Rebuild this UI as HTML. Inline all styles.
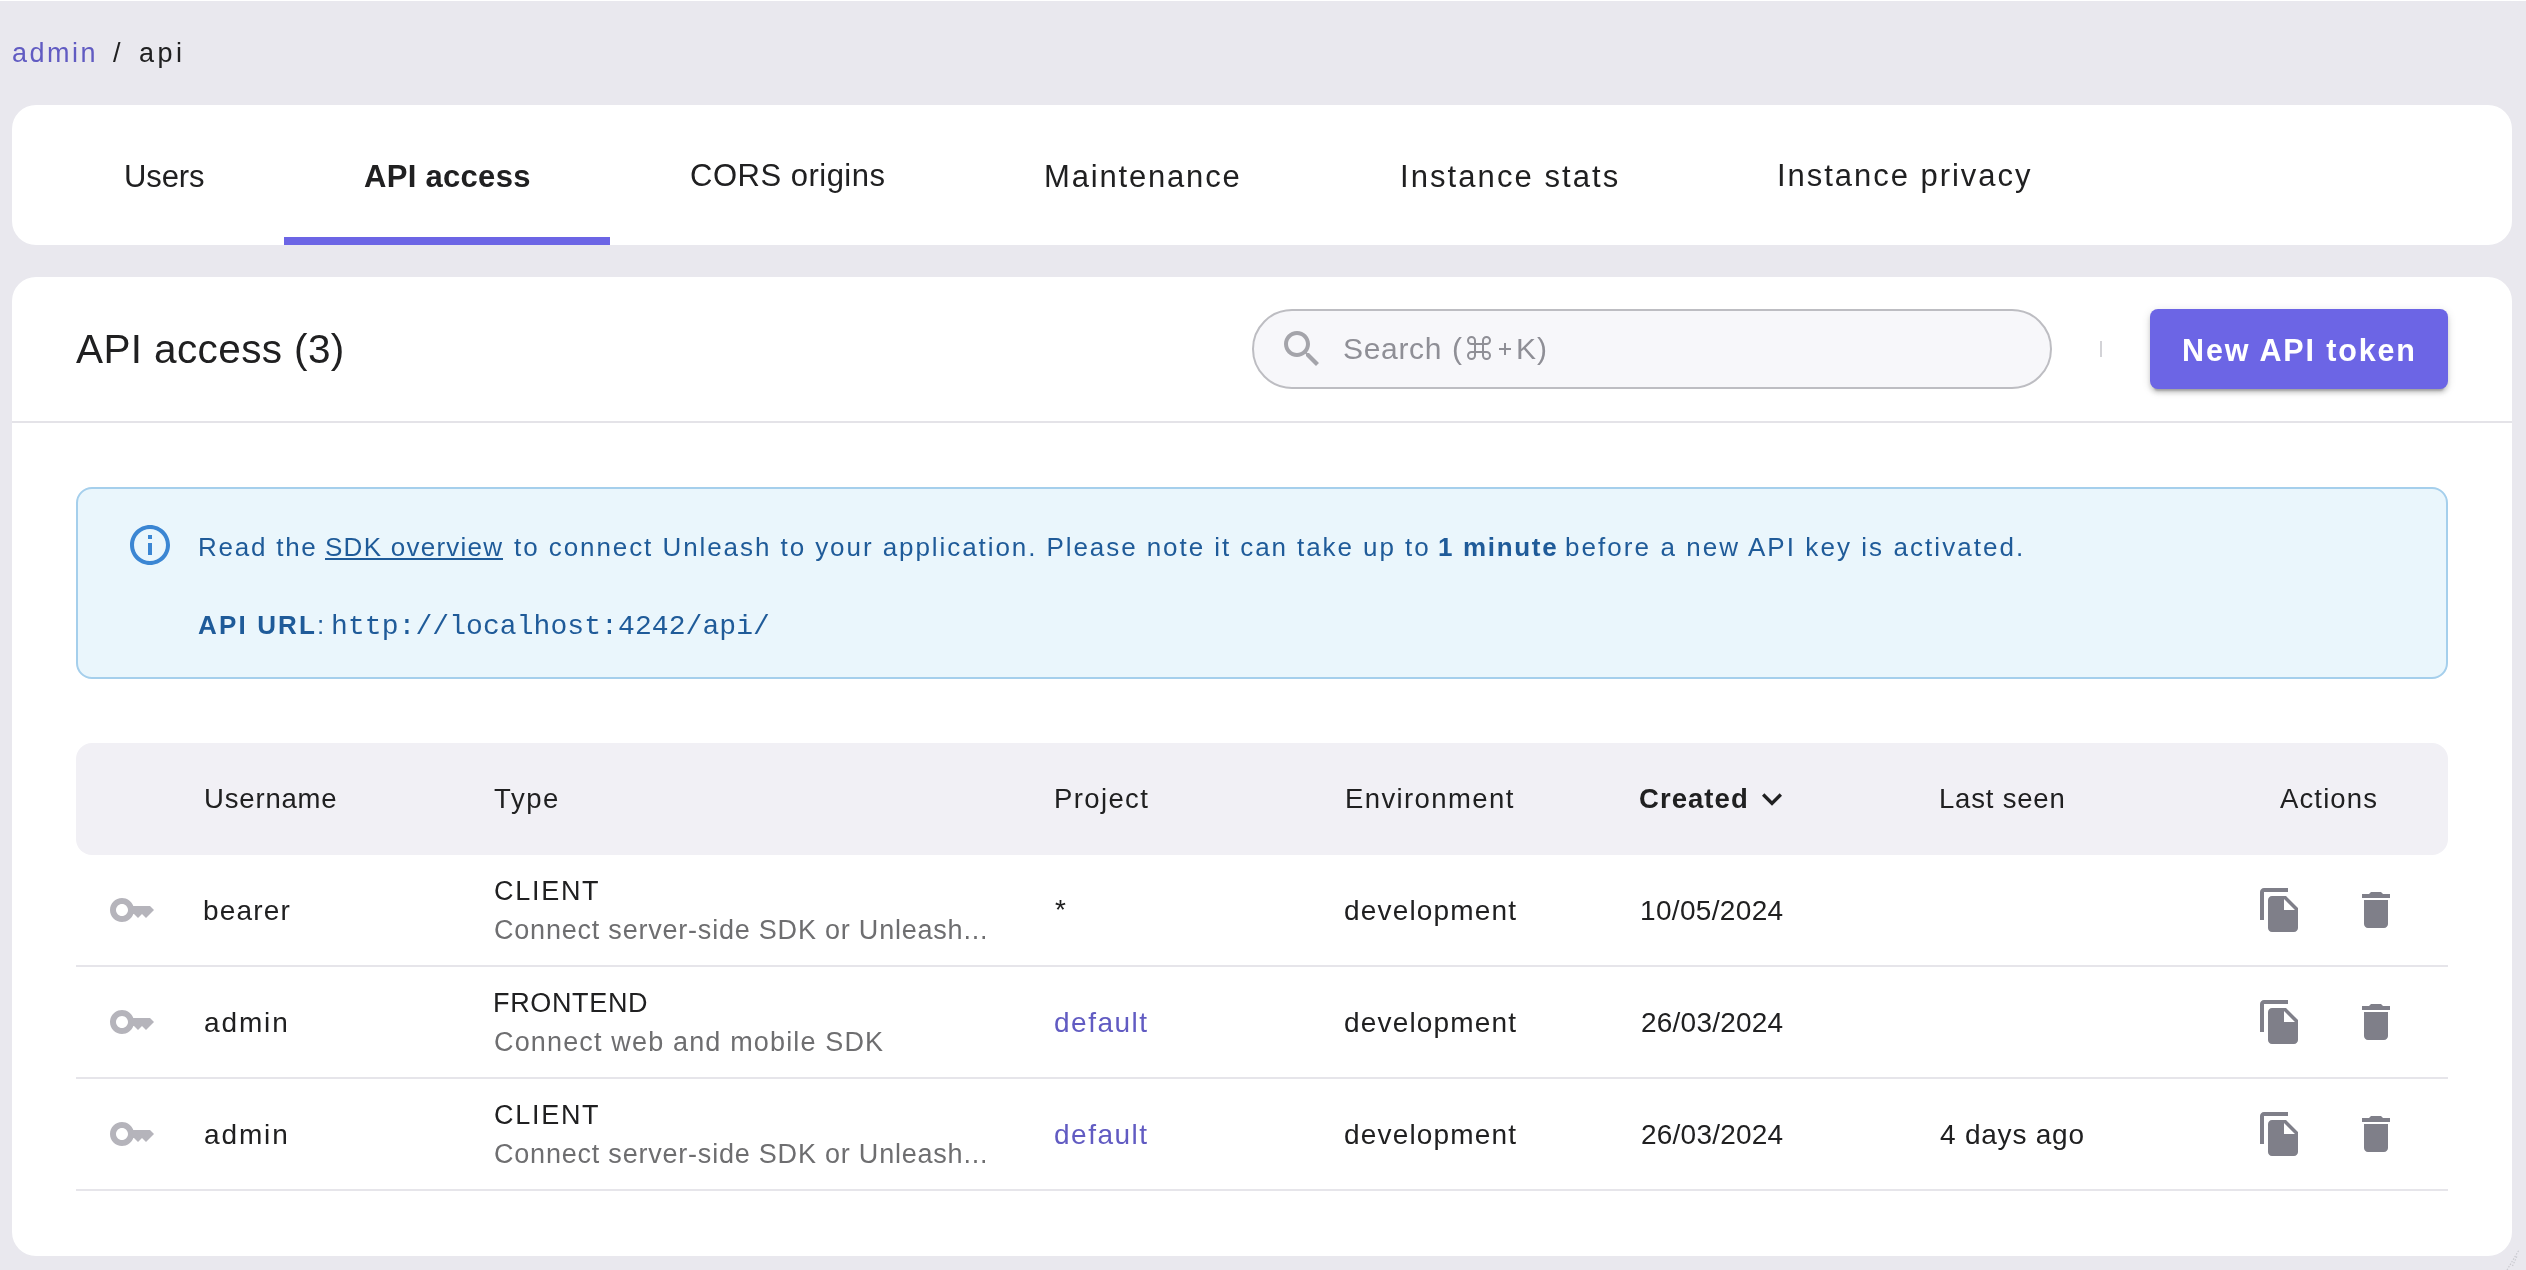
<!DOCTYPE html>
<html><head><meta charset="utf-8"><style>
html,body{margin:0;padding:0;}
body{width:2526px;height:1270px;overflow:hidden;position:relative;background:#e9e8ee;font-family:"Liberation Sans",sans-serif;}
.b{position:absolute;box-sizing:border-box;}
.t{position:absolute;white-space:nowrap;will-change:transform;}
.ic{position:absolute;}
u{text-decoration:underline;text-decoration-thickness:2px;text-underline-offset:3px;}
</style></head><body>
<div class="b" style="left:0;top:0;width:2526px;height:1px;background:#fff"></div>
<div class="b" style="left:12px;top:105px;width:2500px;height:140px;background:#fff;border-radius:24px"></div>
<div class="b" style="left:284px;top:237px;width:326px;height:8px;background:#6c65e5"></div>
<div class="b" style="left:12px;top:277px;width:2500px;height:979px;background:#fff;border-radius:24px"></div>
<div class="b" style="left:12px;top:421px;width:2500px;height:2px;background:#e4e3e8"></div>
<div class="b" style="left:1252px;top:309px;width:800px;height:80px;background:#f7f7fa;border:2px solid #bdbdc2;border-radius:40px"></div>
<div class="b" style="left:1499px;top:348px;width:12px;height:2px;background:#8f8f96"></div>
<div class="b" style="left:1504px;top:343px;width:2px;height:12px;background:#8f8f96"></div>
<div class="b" style="left:2100px;top:341px;width:2px;height:16px;background:#d3d3d7"></div>
<div class="b" style="left:2150px;top:309px;width:298px;height:80px;background:#6c65e5;border-radius:8px;box-shadow:0 6px 2px -4px rgba(0,0,0,.2),0 4px 4px 0 rgba(0,0,0,.14),0 2px 10px 0 rgba(0,0,0,.12)"></div>
<div class="b" style="left:76px;top:487px;width:2372px;height:192px;background:#eaf6fc;border:2px solid #a5cfec;border-radius:16px"></div>
<div class="b" style="left:325px;top:558px;width:178px;height:2px;background:#1f5b99"></div>
<div class="b" style="left:76px;top:743px;width:2372px;height:112px;background:#f1f0f5;border-radius:16px"></div>
<div class="b" style="left:76px;top:965px;width:2372px;height:2px;background:#e6e5ea"></div>
<div class="b" style="left:76px;top:1077px;width:2372px;height:2px;background:#e6e5ea"></div>
<div class="b" style="left:76px;top:1189px;width:2372px;height:2px;background:#e6e5ea"></div>
<svg class="ic" style="left:2496px;top:1240px;width:30px;height:30px" viewBox="0 0 30 30"><path d="M11 30 L23 10 M16.5 26 L21.5 15" stroke="#c9c9cf" stroke-width="1.2" stroke-dasharray="1.5 1.5" fill="none"/></svg>
<svg class="ic" style="left:1278px;top:325px;width:48px;height:48px;fill:#a4a4aa" viewBox="0 0 24 24"><path d="M15.5 14h-.79l-.28-.27C15.41 12.59 16 11.11 16 9.5 16 5.91 13.09 3 9.5 3S3 5.91 3 9.5 5.91 16 9.5 16c1.61 0 3.09-.59 4.23-1.57l.27.28v.79l5 4.99L20.49 19l-4.99-5zm-6 0C7.01 14 5 11.99 5 9.5S7.01 5 9.5 5 14 7.01 14 9.5 11.99 14 9.5 14z"/></svg><svg class="ic" style="left:1467px;top:335.5px;width:24px;height:24px" viewBox="0 0 24 24"><path d="M8 8V4.5A3.5 3.5 0 1 0 4.5 8H19.5A3.5 3.5 0 1 0 16 4.5V19.5A3.5 3.5 0 1 0 19.5 16H4.5A3.5 3.5 0 1 0 8 19.5Z" fill="none" stroke="#8f8f96" stroke-width="2"/></svg><svg class="ic" style="left:126px;top:521px;width:48px;height:48px;fill:#3b86d3" viewBox="0 0 24 24"><path d="M11 7h2v2h-2zm0 4h2v6h-2zm1-9C6.48 2 2 6.48 2 12s4.48 10 10 10 10-4.48 10-10S17.52 2 12 2zm0 18c-4.41 0-8-3.59-8-8s3.59-8 8-8 8 3.59 8 8-3.59 8-8 8z"/></svg><svg class="ic" style="left:1752px;top:778.5px;width:40px;height:40px;fill:#202021" viewBox="0 0 24 24"><path d="M7.41 8.59 12 13.17l4.59-4.58L18 10l-6 6-6-6 1.41-1.41z"/></svg><svg class="ic" style="left:108px;top:886px;width:48px;height:48px;fill:#b5b4bb" viewBox="0 0 24 24"><path d="M21 10h-8.35C11.83 7.67 9.61 6 7 6c-3.31 0-6 2.69-6 6s2.69 6 6 6c2.61 0 4.83-1.67 5.65-4H13l2 2 2-2 2 2 4-4.04L21 10zM7 15c-1.65 0-3-1.35-3-3s1.35-3 3-3 3 1.35 3 3-1.35 3-3 3z"/></svg><svg class="ic" style="left:2256px;top:886px;width:48px;height:48px;fill:#7f7f89" viewBox="0 0 24 24"><path d="M16 1H4c-1.1 0-2 .9-2 2v14h2V3h12V1zm-1 4 6 6v10c0 1.1-.9 2-2 2H7.99C6.89 23 6 22.1 6 21l.01-14c0-1.1.89-2 1.99-2h7zm-1 7h5.5L14 6.5V12z"/></svg><svg class="ic" style="left:2352px;top:886px;width:48px;height:48px;fill:#7f7f89" viewBox="0 0 24 24"><path d="M6 19c0 1.1.9 2 2 2h8c1.1 0 2-.9 2-2V7H6v12zM19 4h-3.5l-1-1h-5l-1 1H5v2h14V4z"/></svg><svg class="ic" style="left:108px;top:998px;width:48px;height:48px;fill:#b5b4bb" viewBox="0 0 24 24"><path d="M21 10h-8.35C11.83 7.67 9.61 6 7 6c-3.31 0-6 2.69-6 6s2.69 6 6 6c2.61 0 4.83-1.67 5.65-4H13l2 2 2-2 2 2 4-4.04L21 10zM7 15c-1.65 0-3-1.35-3-3s1.35-3 3-3 3 1.35 3 3-1.35 3-3 3z"/></svg><svg class="ic" style="left:2256px;top:998px;width:48px;height:48px;fill:#7f7f89" viewBox="0 0 24 24"><path d="M16 1H4c-1.1 0-2 .9-2 2v14h2V3h12V1zm-1 4 6 6v10c0 1.1-.9 2-2 2H7.99C6.89 23 6 22.1 6 21l.01-14c0-1.1.89-2 1.99-2h7zm-1 7h5.5L14 6.5V12z"/></svg><svg class="ic" style="left:2352px;top:998px;width:48px;height:48px;fill:#7f7f89" viewBox="0 0 24 24"><path d="M6 19c0 1.1.9 2 2 2h8c1.1 0 2-.9 2-2V7H6v12zM19 4h-3.5l-1-1h-5l-1 1H5v2h14V4z"/></svg><svg class="ic" style="left:108px;top:1110px;width:48px;height:48px;fill:#b5b4bb" viewBox="0 0 24 24"><path d="M21 10h-8.35C11.83 7.67 9.61 6 7 6c-3.31 0-6 2.69-6 6s2.69 6 6 6c2.61 0 4.83-1.67 5.65-4H13l2 2 2-2 2 2 4-4.04L21 10zM7 15c-1.65 0-3-1.35-3-3s1.35-3 3-3 3 1.35 3 3-1.35 3-3 3z"/></svg><svg class="ic" style="left:2256px;top:1110px;width:48px;height:48px;fill:#7f7f89" viewBox="0 0 24 24"><path d="M16 1H4c-1.1 0-2 .9-2 2v14h2V3h12V1zm-1 4 6 6v10c0 1.1-.9 2-2 2H7.99C6.89 23 6 22.1 6 21l.01-14c0-1.1.89-2 1.99-2h7zm-1 7h5.5L14 6.5V12z"/></svg><svg class="ic" style="left:2352px;top:1110px;width:48px;height:48px;fill:#7f7f89" viewBox="0 0 24 24"><path d="M6 19c0 1.1.9 2 2 2h8c1.1 0 2-.9 2-2V7H6v12zM19 4h-3.5l-1-1h-5l-1 1H5v2h14V4z"/></svg>
<div class="t" id="bc_admin" style="left:12.00px;top:40.14px;font-size:27px;line-height:27px;font-weight:400;color:#615bc2;font-family:'Liberation Sans', sans-serif;letter-spacing:2.500px">admin</div><div class="t" id="bc_slash" style="left:113.00px;top:40.14px;font-size:27px;line-height:27px;font-weight:400;color:#202021;font-family:'Liberation Sans', sans-serif;letter-spacing:0.000px">/</div><div class="t" id="bc_api" style="left:139.00px;top:40.14px;font-size:27px;line-height:27px;font-weight:400;color:#202021;font-family:'Liberation Sans', sans-serif;letter-spacing:3.500px">api</div><div class="t" id="tab_users" style="left:124.00px;top:160.75px;font-size:31px;line-height:31px;font-weight:400;color:#202021;font-family:'Liberation Sans', sans-serif;letter-spacing:-0.125px">Users</div><div class="t" id="tab_api" style="left:364.40px;top:160.75px;font-size:31px;line-height:31px;font-weight:700;color:#202021;font-family:'Liberation Sans', sans-serif;letter-spacing:0.300px">API access</div><div class="t" id="tab_cors" style="left:690.00px;top:160.25px;font-size:31px;line-height:31px;font-weight:400;color:#202021;font-family:'Liberation Sans', sans-serif;letter-spacing:0.500px">CORS origins</div><div class="t" id="tab_maint" style="left:1044.40px;top:160.75px;font-size:31px;line-height:31px;font-weight:400;color:#202021;font-family:'Liberation Sans', sans-serif;letter-spacing:1.820px">Maintenance</div><div class="t" id="tab_stats" style="left:1400.00px;top:160.75px;font-size:31px;line-height:31px;font-weight:400;color:#202021;font-family:'Liberation Sans', sans-serif;letter-spacing:2.077px">Instance stats</div><div class="t" id="tab_priv" style="left:1777.00px;top:160.25px;font-size:31px;line-height:31px;font-weight:400;color:#202021;font-family:'Liberation Sans', sans-serif;letter-spacing:1.967px">Instance privacy</div><div class="t" id="h_title" style="left:76.00px;top:328.51px;font-size:40.5px;line-height:40.5px;font-weight:400;color:#202021;font-family:'Liberation Sans', sans-serif;letter-spacing:0.385px">API access (3)</div><div class="t" id="search_a" style="left:1342.50px;top:333.60px;font-size:30px;line-height:30px;font-weight:400;color:#8f8f96;font-family:'Liberation Sans', sans-serif;letter-spacing:0.680px">Search</div><div class="t" id="search_b" style="left:1452.00px;top:333.60px;font-size:30px;line-height:30px;font-weight:400;color:#8f8f96;font-family:'Liberation Sans', sans-serif;letter-spacing:0.000px">(</div><div class="t" id="search_c" style="left:1515.60px;top:333.60px;font-size:30px;line-height:30px;font-weight:400;color:#8f8f96;font-family:'Liberation Sans', sans-serif;letter-spacing:1.000px">K)</div><div class="t" id="btn" style="left:2182.40px;top:335.18px;font-size:30.5px;line-height:30.5px;font-weight:700;color:#ffffff;font-family:'Liberation Sans', sans-serif;letter-spacing:1.850px">New API token</div><div class="t" id="al_1a" style="left:198.40px;top:533.99px;font-size:26px;line-height:26px;font-weight:400;color:#1f5b99;font-family:'Liberation Sans', sans-serif;letter-spacing:1.757px">Read the</div><div class="t" id="al_1b" style="left:325.20px;top:533.99px;font-size:26px;line-height:26px;font-weight:400;color:#1f5b99;font-family:'Liberation Sans', sans-serif;letter-spacing:1.255px">SDK overview</div><div class="t" id="al_1c" style="left:514.00px;top:533.99px;font-size:26px;line-height:26px;font-weight:400;color:#1f5b99;font-family:'Liberation Sans', sans-serif;letter-spacing:1.930px">to connect Unleash to your application. Please note it can take up to</div><div class="t" id="al_1d" style="left:1437.60px;top:533.99px;font-size:26px;line-height:26px;font-weight:700;color:#1f5b99;font-family:'Liberation Sans', sans-serif;letter-spacing:1.671px">1 minute</div><div class="t" id="al_1e" style="left:1564.60px;top:533.99px;font-size:26px;line-height:26px;font-weight:400;color:#1f5b99;font-family:'Liberation Sans', sans-serif;letter-spacing:2.064px">before a new API key is activated.</div><div class="t" id="al_2" style="left:198.20px;top:612.29px;font-size:26px;line-height:26px;font-weight:400;color:#1f5b99;font-family:'Liberation Sans', sans-serif;letter-spacing:2.143px"><b>API URL</b>:</div><div class="t" id="al_url" style="left:331.30px;top:612.85px;font-size:28px;line-height:28px;font-weight:400;color:#1f5b99;font-family:'Liberation Mono', monospace;letter-spacing:0.080px">http://localhost:4242/api/</div><div class="t" id="th_user" style="left:204.20px;top:785.02px;font-size:27.5px;line-height:27.5px;font-weight:400;color:#202021;font-family:'Liberation Sans', sans-serif;letter-spacing:0.829px">Username</div><div class="t" id="th_type" style="left:494.20px;top:785.02px;font-size:27.5px;line-height:27.5px;font-weight:400;color:#202021;font-family:'Liberation Sans', sans-serif;letter-spacing:1.600px">Type</div><div class="t" id="th_proj" style="left:1054.20px;top:785.02px;font-size:27.5px;line-height:27.5px;font-weight:400;color:#202021;font-family:'Liberation Sans', sans-serif;letter-spacing:1.383px">Project</div><div class="t" id="th_env" style="left:1344.60px;top:785.02px;font-size:27.5px;line-height:27.5px;font-weight:400;color:#202021;font-family:'Liberation Sans', sans-serif;letter-spacing:1.390px">Environment</div><div class="t" id="th_created" style="left:1639.40px;top:785.02px;font-size:27.5px;line-height:27.5px;font-weight:700;color:#202021;font-family:'Liberation Sans', sans-serif;letter-spacing:1.050px">Created</div><div class="t" id="th_last" style="left:1939.00px;top:785.02px;font-size:27.5px;line-height:27.5px;font-weight:400;color:#202021;font-family:'Liberation Sans', sans-serif;letter-spacing:0.812px">Last seen</div><div class="t" id="th_act" style="left:2279.80px;top:785.02px;font-size:27.5px;line-height:27.5px;font-weight:400;color:#202021;font-family:'Liberation Sans', sans-serif;letter-spacing:1.133px">Actions</div><div class="t" id="r0_user" style="left:203.00px;top:897.29px;font-size:28px;line-height:28px;font-weight:400;color:#202021;font-family:'Liberation Sans', sans-serif;letter-spacing:1.180px">bearer</div><div class="t" id="r0_type" style="left:494.20px;top:878.14px;font-size:27px;line-height:27px;font-weight:400;color:#202021;font-family:'Liberation Sans', sans-serif;letter-spacing:1.720px">CLIENT</div><div class="t" id="r0_desc" style="left:493.80px;top:916.64px;font-size:27px;line-height:27px;font-weight:400;color:#6e6e70;font-family:'Liberation Sans', sans-serif;letter-spacing:0.786px">Connect server-side SDK or Unleash...</div><div class="t" id="r0_proj" style="left:1055.00px;top:896.29px;font-size:28px;line-height:28px;font-weight:400;color:#202021;font-family:'Liberation Sans', sans-serif;letter-spacing:0.000px">*</div><div class="t" id="r0_env" style="left:1344.20px;top:897.29px;font-size:28px;line-height:28px;font-weight:400;color:#202021;font-family:'Liberation Sans', sans-serif;letter-spacing:1.170px">development</div><div class="t" id="r0_date" style="left:1640.20px;top:897.29px;font-size:28px;line-height:28px;font-weight:400;color:#202021;font-family:'Liberation Sans', sans-serif;letter-spacing:0.333px">10/05/2024</div><div class="t" id="r1_user" style="left:204.00px;top:1009.29px;font-size:28px;line-height:28px;font-weight:400;color:#202021;font-family:'Liberation Sans', sans-serif;letter-spacing:1.875px">admin</div><div class="t" id="r1_type" style="left:493.20px;top:990.14px;font-size:27px;line-height:27px;font-weight:400;color:#202021;font-family:'Liberation Sans', sans-serif;letter-spacing:0.657px">FRONTEND</div><div class="t" id="r1_desc" style="left:493.80px;top:1028.64px;font-size:27px;line-height:27px;font-weight:400;color:#6e6e70;font-family:'Liberation Sans', sans-serif;letter-spacing:1.156px">Connect web and mobile SDK</div><div class="t" id="r1_proj" style="left:1054.00px;top:1009.29px;font-size:28px;line-height:28px;font-weight:400;color:#615bc2;font-family:'Liberation Sans', sans-serif;letter-spacing:1.500px">default</div><div class="t" id="r1_env" style="left:1344.20px;top:1009.29px;font-size:28px;line-height:28px;font-weight:400;color:#202021;font-family:'Liberation Sans', sans-serif;letter-spacing:1.170px">development</div><div class="t" id="r1_date" style="left:1641.20px;top:1009.29px;font-size:28px;line-height:28px;font-weight:400;color:#202021;font-family:'Liberation Sans', sans-serif;letter-spacing:0.222px">26/03/2024</div><div class="t" id="r2_user" style="left:204.00px;top:1121.29px;font-size:28px;line-height:28px;font-weight:400;color:#202021;font-family:'Liberation Sans', sans-serif;letter-spacing:1.875px">admin</div><div class="t" id="r2_type" style="left:494.20px;top:1102.14px;font-size:27px;line-height:27px;font-weight:400;color:#202021;font-family:'Liberation Sans', sans-serif;letter-spacing:1.720px">CLIENT</div><div class="t" id="r2_desc" style="left:493.80px;top:1140.64px;font-size:27px;line-height:27px;font-weight:400;color:#6e6e70;font-family:'Liberation Sans', sans-serif;letter-spacing:0.786px">Connect server-side SDK or Unleash...</div><div class="t" id="r2_proj" style="left:1054.00px;top:1121.29px;font-size:28px;line-height:28px;font-weight:400;color:#615bc2;font-family:'Liberation Sans', sans-serif;letter-spacing:1.500px">default</div><div class="t" id="r2_env" style="left:1344.20px;top:1121.29px;font-size:28px;line-height:28px;font-weight:400;color:#202021;font-family:'Liberation Sans', sans-serif;letter-spacing:1.170px">development</div><div class="t" id="r2_date" style="left:1641.20px;top:1121.29px;font-size:28px;line-height:28px;font-weight:400;color:#202021;font-family:'Liberation Sans', sans-serif;letter-spacing:0.222px">26/03/2024</div><div class="t" id="r2_last" style="left:1940.00px;top:1121.29px;font-size:28px;line-height:28px;font-weight:400;color:#202021;font-family:'Liberation Sans', sans-serif;letter-spacing:0.778px">4 days ago</div>
</body></html>
